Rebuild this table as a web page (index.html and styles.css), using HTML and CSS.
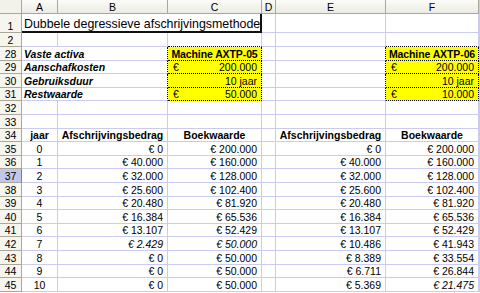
FILE: index.html
```html
<!DOCTYPE html>
<html lang="nl">
<head>
  <meta charset="UTF-8" />
  <title>Dubbele degressieve afschrijvingsmethode</title>
  <link rel="stylesheet" href="styles.css">
</head>
<body>
  <div class="sheet">
    <!-- kolomkoppen -->
    <div class="hd corner"></div>
    <div class="hd">A</div>
    <div class="hd">B</div>
    <div class="hd">C</div>
    <div class="hd">D</div>
    <div class="hd">E</div>
    <div class="hd">F</div>

    <div class="rh">1</div>
    <div class="title">Dubbele degressieve afschrijvingsmethode</div>
    <div class="c"></div>
    <div class="c"></div>
    <div class="c"></div>

    <div class="rh">2</div>
    <div class="c"></div>
    <div class="c"></div>
    <div class="c dt"></div>
    <div class="c"></div>
    <div class="c"></div>
    <div class="c dt"></div>

    <!-- gegevens van de machines -->
    <div class="rh">28</div>
    <div class="c spill lbl">Vaste activa</div>
    <div class="c dl"></div>
    <div class="c yel bold mid">Machine AXTP-05</div>
    <div class="c"></div>
    <div class="c dl"></div>
    <div class="c yel bold mid">Machine AXTP-06</div>

    <div class="rh">29</div>
    <div class="c spill lbl">Aanschafkosten</div>
    <div class="c dl"></div>
    <div class="c yel acct"><span>€</span><span>200.000</span></div>
    <div class="c"></div>
    <div class="c dl"></div>
    <div class="c yel acct"><span>€</span><span>200.000</span></div>

    <div class="rh">30</div>
    <div class="c spill lbl">Gebruiksduur</div>
    <div class="c dl"></div>
    <div class="c yel num">10 jaar</div>
    <div class="c"></div>
    <div class="c dl"></div>
    <div class="c yel num">10 jaar</div>

    <div class="rh">31</div>
    <div class="c spill lbl">Restwaarde</div>
    <div class="c dl"></div>
    <div class="c yel acct"><span>€</span><span>50.000</span></div>
    <div class="c"></div>
    <div class="c dl"></div>
    <div class="c yel acct"><span>€</span><span>10.000</span></div>

    <div class="rh">32</div>
    <div class="c"></div><div class="c"></div><div class="c"></div>
    <div class="c"></div><div class="c"></div><div class="c"></div>

    <div class="rh">33</div>
    <div class="c"></div><div class="c"></div><div class="c"></div>
    <div class="c"></div><div class="c"></div><div class="c"></div>

    <!-- afschrijvingstabel -->
    <div class="rh">34</div>
    <div class="c bold mid">jaar</div>
    <div class="c bold mid">Afschrijvingsbedrag</div>
    <div class="c bold mid">Boekwaarde</div>
    <div class="c"></div>
    <div class="c bold mid">Afschrijvingsbedrag</div>
    <div class="c bold mid">Boekwaarde</div>

    <div class="rh">35</div>
    <div class="c mid">0</div>
    <div class="c num">€ 0</div>
    <div class="c num">€ 200.000</div>
    <div class="c"></div>
    <div class="c num">€ 0</div>
    <div class="c num">€ 200.000</div>

    <div class="rh">36</div>
    <div class="c mid">1</div>
    <div class="c num">€ 40.000</div>
    <div class="c num">€ 160.000</div>
    <div class="c"></div>
    <div class="c num">€ 40.000</div>
    <div class="c num">€ 160.000</div>

    <div class="rh sel">37</div>
    <div class="c mid">2</div>
    <div class="c num">€ 32.000</div>
    <div class="c num">€ 128.000</div>
    <div class="c"></div>
    <div class="c num">€ 32.000</div>
    <div class="c num">€ 128.000</div>

    <div class="rh">38</div>
    <div class="c mid">3</div>
    <div class="c num">€ 25.600</div>
    <div class="c num">€ 102.400</div>
    <div class="c"></div>
    <div class="c num">€ 25.600</div>
    <div class="c num">€ 102.400</div>

    <div class="rh">39</div>
    <div class="c mid">4</div>
    <div class="c num">€ 20.480</div>
    <div class="c num">€ 81.920</div>
    <div class="c"></div>
    <div class="c num">€ 20.480</div>
    <div class="c num">€ 81.920</div>

    <div class="rh">40</div>
    <div class="c mid">5</div>
    <div class="c num">€ 16.384</div>
    <div class="c num">€ 65.536</div>
    <div class="c"></div>
    <div class="c num">€ 16.384</div>
    <div class="c num">€ 65.536</div>

    <div class="rh">41</div>
    <div class="c mid">6</div>
    <div class="c num">€ 13.107</div>
    <div class="c num">€ 52.429</div>
    <div class="c"></div>
    <div class="c num">€ 13.107</div>
    <div class="c num">€ 52.429</div>

    <div class="rh">42</div>
    <div class="c mid">7</div>
    <div class="c num ital">€ 2.429</div>
    <div class="c num ital">€ 50.000</div>
    <div class="c"></div>
    <div class="c num">€ 10.486</div>
    <div class="c num">€ 41.943</div>

    <div class="rh">43</div>
    <div class="c mid">8</div>
    <div class="c num">€ 0</div>
    <div class="c num">€ 50.000</div>
    <div class="c"></div>
    <div class="c num">€ 8.389</div>
    <div class="c num">€ 33.554</div>

    <div class="rh">44</div>
    <div class="c mid">9</div>
    <div class="c num">€ 0</div>
    <div class="c num">€ 50.000</div>
    <div class="c"></div>
    <div class="c num">€ 6.711</div>
    <div class="c num">€ 26.844</div>

    <div class="rh">45</div>
    <div class="c mid">10</div>
    <div class="c num">€ 0</div>
    <div class="c num">€ 50.000</div>
    <div class="c"></div>
    <div class="c num">€ 5.369</div>
    <div class="c num ital">€ 21.475</div>
  </div>
</body>
</html>
```

FILE: styles.css
```css
html, body {
  margin: 0;
  padding: 0;
  background-color: white;
  overflow: hidden;
}

.sheet {
  display: grid;
  grid-template-columns: 22px 36px 110px 94px 14px 110px 93px;
  grid-template-rows: 14px 19px 14px;
  grid-auto-rows: 13.6px;
  width: 480px;
  font-family: "Liberation Sans", Arial, sans-serif;
  font-size: 10.5px;
  color: #000;
  border-right: 1px solid #cbcbf0;
  box-sizing: border-box;
}

.sheet > div {
  box-sizing: border-box;
  white-space: nowrap;
  display: flex;
  align-items: flex-end;
  line-height: 12px;
  min-width: 0;
}

/* koppen */
.hd {
  justify-content: center;
  align-items: center !important;
  background: linear-gradient(#fbfbf8, #ecebe3);
  border-right: 1px solid #aca899;
  border-bottom: 1px solid #aca899;
}

.corner {
  background: #f3f2ea;
}

.rh {
  justify-content: center;
  background-color: #f6f5ee;
  border-right: 1px solid #aca899;
  border-bottom: 1px solid #aca899;
}

.rh.sel {
  background-color: #c1c7e8;
  border-right-color: #6d7fc4;
}

/* cellen */
.c {
  border-right: 1px solid #cbcbf0;
  border-bottom: 1px solid #cbcbf0;
  padding: 0 2px;
}

.title {
  grid-column: span 3;
  font-size: 12.4px;
  line-height: 15px;
  padding: 0 2px 1px;
  border-right: 2px solid #111;
  border-bottom: 2px solid #111;
}

.spill {
  overflow: visible;
  border-right: none;
}

.lbl {
  font-weight: bold;
  font-style: italic;
}

.bold {
  font-weight: bold;
}

.ital {
  font-style: italic;
}

.mid {
  justify-content: center;
}

.yel.mid {
  padding: 0;
  letter-spacing: -0.1px;
}

.num {
  justify-content: flex-end;
  padding-right: 4px;
}

.acct {
  justify-content: space-between;
  padding: 0 4px 0 5px;
}

/* gele invoervakken met stippelrand */
.yel {
  background-color: #ffff00;
  border-right: 1px dotted #000;
  border-bottom: 1px dotted #000;
}

.dt {
  border-bottom: 1px dotted #000;
}

.dl {
  border-right: 1px dotted #000;
}
```
